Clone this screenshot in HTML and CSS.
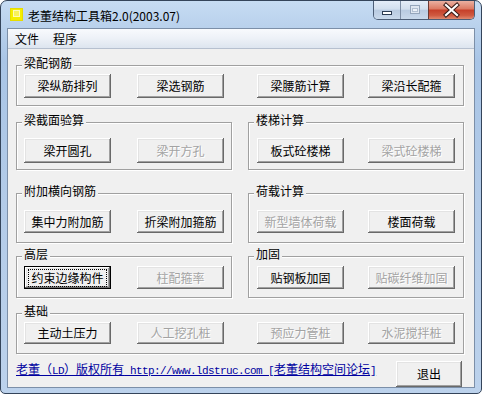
FILE: index.html
```html
<!DOCTYPE html>
<html lang="zh-CN">
<head>
<meta charset="utf-8">
<title>老董结构工具箱2.0(2003.07)</title>
<link rel="stylesheet" href="styles.css">
</head>
<body>
<div class="window">
  <div class="titlebar">
    <span class="app-icon"><span class="app-icon-inner"></span></span>
    <span class="title">老董结构工具箱2.0(2003.07)</span>
    <div class="caption">
      <span class="cap cap-min"><svg width="26" height="18" viewBox="0 0 26 18"><rect x="8.5" y="10.5" width="9" height="3" fill="#fff" stroke="#2c3c52"/></svg></span>
      <span class="cap cap-max"><svg width="27" height="18" viewBox="0 0 27 18"><rect x="9.5" y="4.5" width="9" height="8" fill="#dfe7f1" stroke="#95a6bb"/><rect x="11.5" y="7.5" width="5" height="3" fill="#eef3f9" stroke="#b2c0d1"/></svg></span>
      <span class="cap cap-close"><svg width="45" height="18" viewBox="0 0 45 18"><path d="M17 4 L28 14 M28 4 L17 14" stroke="#3a1c18" stroke-width="4.2" stroke-linecap="square"/><path d="M17 4 L28 14 M28 4 L17 14" stroke="#fff" stroke-width="2.2" stroke-linecap="square"/></svg></span>
    </div>
  </div>
  <div class="client">
    <div class="menubar"><span class="menu-item">文件</span><span class="menu-item">程序</span></div>
    <div class="content">
      <div class="group full r1">
        <span class="gtitle">梁配钢筋</span>
        <div class="split">
          <div class="bset l"><span class="btn">梁纵筋排列</span><span class="btn">梁选钢筋</span></div>
          <div class="bset r"><span class="btn">梁腰筋计算</span><span class="btn">梁沿长配箍</span></div>
        </div>
      </div>
      <div class="pair r2">
        <div class="group">
          <span class="gtitle">梁截面验算</span>
          <div class="bset l"><span class="btn">梁开圆孔</span><span class="btn disabled">梁开方孔</span></div>
        </div>
        <div class="group">
          <span class="gtitle">楼梯计算</span>
          <div class="bset r"><span class="btn">板式砼楼梯</span><span class="btn disabled">梁式砼楼梯</span></div>
        </div>
      </div>
      <div class="pair r3">
        <div class="group">
          <span class="gtitle">附加横向钢筋</span>
          <div class="bset l"><span class="btn">集中力附加筋</span><span class="btn">折梁附加箍筋</span></div>
        </div>
        <div class="group">
          <span class="gtitle">荷载计算</span>
          <div class="bset r"><span class="btn disabled">新型墙体荷载</span><span class="btn">楼面荷载</span></div>
        </div>
      </div>
      <div class="pair r4">
        <div class="group">
          <span class="gtitle">高层</span>
          <div class="bset l"><span class="btn focused"><span class="focus-rect">约束边缘构件</span></span><span class="btn disabled">柱配箍率</span></div>
        </div>
        <div class="group">
          <span class="gtitle">加固</span>
          <div class="bset r"><span class="btn">贴钢板加固</span><span class="btn disabled">贴碳纤维加固</span></div>
        </div>
      </div>
      <div class="group full r5">
        <span class="gtitle">基础</span>
        <div class="split">
          <div class="bset l"><span class="btn">主动土压力</span><span class="btn disabled">人工挖孔桩</span></div>
          <div class="bset r"><span class="btn disabled">预应力管桩</span><span class="btn disabled">水泥搅拌桩</span></div>
        </div>
      </div>
      <div class="footer">
        <a class="link" href="#">老董（<span class="asc">LD</span>）版权所有<span class="asc"> http://www.ldstruc.com [</span>老董结构空间论坛<span class="asc">]</span></a>
        <span class="btn exit">退出</span>
      </div>
    </div>
  </div>
</div>
</body>
</html>
```
FILE: styles.css
```css
html, body {
  margin: 0;
  padding: 0;
}
body {
  width: 482px;
  height: 394px;
  overflow: hidden;
  background: #ffffff;
  font-family: "Noto Sans CJK SC", "Noto Sans", sans-serif;
  font-size: 12px;
  color: #000;
}
.window {
  box-sizing: border-box;
  width: 482px;
  height: 394px;
  border: 1px solid #34445a;
  border-radius: 7px 7px 5px 5px;
  background: linear-gradient(180deg, #c6dcf3 0px, #b9d1ec 26px, #a9c5e6 60px, #b3cbe8 200px, #bcd2ec 394px);
  padding: 0 6px 5px 6px;
  display: flex;
  flex-direction: column;
}
.titlebar {
  height: 27px;
  display: flex;
  align-items: flex-start;
  flex: none;
}
.app-icon {
  width: 13px;
  height: 13px;
  margin: 7px 0 0 3px;
  background: #f4ee00;
  box-shadow: inset 0 0 0 1px #e6dc00;
  display: flex;
  justify-content: center;
  align-items: flex-start;
  flex: none;
}
.app-icon-inner {
  width: 5px;
  height: 5px;
  margin-top: 2px;
  border: 1px solid #fffab8;
  background: #f8f25a;
}
.title {
  margin: 8px 0 0 5px;
  line-height: 14px;
  font-size: 12px;
  color: #000;
  white-space: nowrap;
}
.caption {
  margin-left: auto;
  display: flex;
  height: 18px;
  border: 1px solid #4d5e76;
  border-top: none;
  border-radius: 0 0 5px 5px;
  overflow: hidden;
  flex: none;
}
.cap {
  display: block;
  height: 18px;
}
.cap svg {
  display: block;
}
.cap-min {
  width: 26px;
  background: linear-gradient(180deg, #e4edf8 0%, #d2dfee 45%, #b9cbe1 52%, #c9d9eb 100%);
}
.cap-max {
  width: 27px;
  border-left: 1px solid #7d8ea5;
  background: linear-gradient(180deg, #e4edf8 0%, #d2dfee 45%, #b9cbe1 52%, #c9d9eb 100%);
}
.cap-close {
  width: 45px;
  border-left: 1px solid #6b3a33;
  background: linear-gradient(180deg, #eab0a1 0%, #dc7c66 42%, #c6412b 52%, #cf5a41 80%, #e0896f 100%);
}
.client {
  flex: 1;
  border: 1px solid #7c8fa8;
  background: #f0f0f0;
  display: flex;
  flex-direction: column;
}
.menubar {
  height: 19px;
  border-bottom: 1px solid #b6c0cf;
  background: linear-gradient(180deg, #f8fafd 0%, #edf1f7 50%, #dde5ef 100%);
  display: flex;
  flex: none;
}
.menu-item {
  padding: 0 7px;
  line-height: 19px;
  font-size: 12px;
}
.content {
  padding: 0 10px 0 8px;
  display: flex;
  flex-direction: column;
}
.group {
  box-sizing: border-box;
  border: 1px solid #a0a0a0;
  box-shadow: inset 1px 1px 0 #ffffff, 1px 1px 0 #ffffff;
  display: flex;
  flex-direction: column;
  align-items: flex-start;
}
.full {
  width: 448px;
}
.pair {
  display: grid;
  grid-template-columns: 216px 216px;
  column-gap: 16px;
}
.pair > .group {
  height: 100%;
}
.gtitle {
  display: block;
  height: 14px;
  line-height: 14px;
  margin: -10px 0 -4px 5px;
  padding: 0 2px;
  background: #f0f0f0;
  font-size: 12px;
  white-space: nowrap;
}
.split {
  align-self: stretch;
  display: grid;
  grid-template-columns: 216px 1fr;
  column-gap: 16px;
}
.bset {
  align-self: stretch;
  display: flex;
}
.bset.l {
  padding-left: 7px;
  gap: 26px;
}
.bset.r {
  padding-left: 8px;
  gap: 24px;
}
.btn {
  box-sizing: border-box;
  width: 87px;
  height: 24px;
  display: flex;
  align-items: center;
  justify-content: center;
  background: #f0f0f0;
  box-shadow: inset -1px -1px 0 #696969, inset 1px 1px 0 #ffffff, inset -2px -2px 0 #a0a0a0, inset 2px 2px 0 #e3e3e3;
  font-size: 12px;
  line-height: 14px;
  color: #000;
  white-space: nowrap;
  flex: none;
}
.btn.disabled {
  color: #a3a3a3;
  text-shadow: 1px 1px 0 #ffffff;
}
.btn.focused {
  border: 1px solid #000;
}
.focus-rect {
  outline: 1px dotted #000;
  outline-offset: 1px;
  padding: 0 1px;
}
.r1 {
  margin-top: 16px;
  height: 41px;
}
.r1 .bset {
  margin-top: 8px;
}
.r1 .btn {
  height: 24px;
}
.r2 {
  margin-top: 16px;
  height: 48px;
}
.r2 .bset {
  margin-top: 15px;
}
.r2 .btn {
  height: 25px;
}
.r3 {
  margin-top: 23px;
  height: 50px;
}
.r3 .bset {
  margin-top: 16px;
}
.r3 .btn {
  height: 23px;
}
.r4 {
  margin-top: 13px;
  height: 42px;
}
.r4 .bset {
  margin-top: 9px;
}
.r4 .btn {
  height: 23px;
}
.r5 {
  margin-top: 15px;
  height: 41px;
}
.r5 .bset {
  margin-top: 8px;
}
.r5 .btn {
  height: 22px;
}
.footer {
  margin-top: 7px;
  padding-right: 2px;
  display: flex;
  justify-content: space-between;
  align-items: flex-start;
}
.link {
  margin-top: 1px;
  font-size: 12px;
  line-height: 14px;
  color: #0000a0;
  text-decoration: underline;
  white-space: nowrap;
}
.asc {
  font-family: "Liberation Mono", monospace;
  font-size: 11px;
  letter-spacing: -0.6px;
}
.btn.exit {
  width: 66px;
  height: 26px;
}
```
